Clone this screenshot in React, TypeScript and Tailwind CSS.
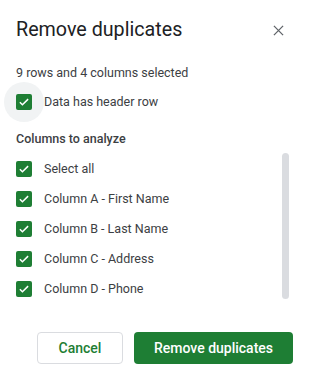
import React from "react";

const columns = [
  "Select all",
  "Column A - First Name",
  "Column B - Last Name",
  "Column C - Address",
  "Column D - Phone",
];

function Check() {
  return (
    <span className="flex h-4 w-4 shrink-0 items-center justify-center rounded-[2px] bg-[#1e7e34]">
      <svg viewBox="0 0 16 16" className="h-3 w-3" fill="none">
        <path d="M2.5 8.3l3.4 3.3L13.5 4.2" stroke="white" strokeWidth="2" />
      </svg>
    </span>
  );
}

function CheckRow({ label, ripple }: { label: string; ripple?: boolean }) {
  return (
    <div className="relative flex h-[30px] items-center gap-3 pl-4">
      {ripple && (
        <span className="absolute left-[4px] top-[-5px] h-10 w-10 rounded-full bg-[#f1f3f4]" />
      )}
      <span className="relative">
        <Check />
      </span>
      <span className="relative text-[12.5px] text-[#3c4043]">{label}</span>
    </div>
  );
}

export default function App() {
  return (
    <div
      className="h-[382px] w-[312px] bg-white"
      style={{ fontFamily: "Roboto, 'Liberation Sans', sans-serif" }}
    >
      <div className="mt-[18px] flex h-6 items-center justify-between pl-4 pr-[28px]">
        <h1 className="text-[19.7px] leading-6 text-[#202124]">Remove duplicates</h1>
        <svg viewBox="0 0 12 12" className="h-[11px] w-[11px]" fill="none">
          <path d="M1 1l10 10M11 1L1 11" stroke="#5f6368" strokeWidth="1.4" />
        </svg>
      </div>

      <p className="mt-[21px] pl-4 text-[12.5px] leading-5 text-[#3c4043]">
        9 rows and 4 columns selected
      </p>

      <div className="mt-1">
        <CheckRow label="Data has header row" ripple />
      </div>

      <p className="mt-[12px] pl-4 text-[12.5px] font-medium leading-5 text-[#3c4043]">
        Columns to analyze
      </p>

      <div className="mt-[5px] flex pr-[23px]">
        <div className="flex-1">
          {columns.map((c) => (
            <CheckRow key={c} label={c} />
          ))}
        </div>
        <div className="-mt-px h-[146px] w-[7px] rounded-full bg-[#dadce0]" />
      </div>

      <div className="mt-[28px] flex justify-end gap-[11px] pr-[19px]">
        <button className="h-8 w-[86px] rounded-[4px] border border-[#dadce0] text-[14px] font-medium text-[#1e7e34]">
          Cancel
        </button>
        <button className="h-8 w-[159px] rounded-[4px] bg-[#1e7e34] text-[14px] font-medium text-white">
          Remove duplicates
        </button>
      </div>
    </div>
  );
}
